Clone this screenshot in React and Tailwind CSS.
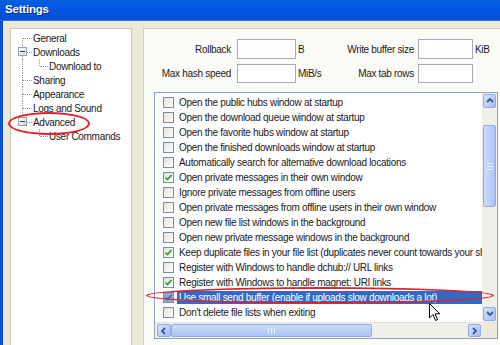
import React from 'react';

const items = [
  { text: 'Open the public hubs window at startup' },
  { text: 'Open the download queue window at startup' },
  { text: 'Open the favorite hubs window at startup' },
  { text: 'Open the finished downloads window at startup' },
  { text: 'Automatically search for alternative download locations' },
  { text: 'Open private messages in their own window', checked: true },
  { text: 'Ignore private messages from offline users' },
  { text: 'Open private messages from offline users in their own window' },
  { text: 'Open new file list windows in the background' },
  { text: 'Open new private message windows in the background' },
  { text: 'Keep duplicate files in your file list (duplicates never count towards your share)', checked: true },
  { text: 'Register with Windows to handle dchub:// URL links' },
  { text: 'Register with Windows to handle magnet: URI links', checked: true },
  { text: 'Use small send buffer (enable if uploads slow downloads a lot)', checked: true, selected: true },
  { text: "Don't delete file lists when exiting" },
  { text: 'Automatically disconnect users who leave the hub' },
];

function CheckBox({ checked, selected }) {
  return (
    <span
      className={`w-[11px] h-[11px] shrink-0 border border-[#7b8ea3] flex items-center justify-center ${
        selected ? 'bg-[#8aa9d6]' : 'bg-gradient-to-br from-[#e2e2dc] to-white'
      }`}
    >
      {checked && (
        <svg width="9" height="9" viewBox="0 0 9 9">
          <path d="M1.5 4.5 L3.5 6.5 L7.5 2" fill="none" stroke={selected ? '#2a6fb0' : '#21a121'} strokeWidth="1.6" />
        </svg>
      )}
    </span>
  );
}

function Minus() {
  return (
    <span className="absolute left-[7px] top-[2px] w-[9px] h-[9px] border border-[#94a2b3] bg-gradient-to-br from-white to-[#d8d8d0] flex items-center justify-center">
      <span className="w-[5px] h-px bg-[#3b3b3b]" />
    </span>
  );
}

function TreeRow({ label, level, minus, vTop, vBottom, outer }) {
  if (level === 0) {
    return (
      <div className="h-[14px] flex items-center">
        <span className="relative w-[22px] h-full shrink-0">
          {vTop && <span className="absolute left-[11px] top-0 h-[7px] border-l border-dotted border-[#9a9a9a]" />}
          {vBottom && <span className="absolute left-[11px] top-[7px] h-[7px] border-l border-dotted border-[#9a9a9a]" />}
          <span className="absolute left-[12px] top-[7px] w-[9px] border-t border-dotted border-[#9a9a9a]" />
          {minus && <Minus />}
        </span>
        <span>{label}</span>
      </div>
    );
  }
  return (
    <div className="h-[14px] flex items-center">
      <span className="relative w-[22px] h-full shrink-0">
        {outer && <span className="absolute left-[11px] top-0 h-[14px] border-l border-dotted border-[#9a9a9a]" />}
      </span>
      <span className="relative w-[16px] h-full shrink-0">
        <span className="absolute left-[6px] top-0 h-[7px] border-l border-dotted border-[#9a9a9a]" />
        <span className="absolute left-[7px] top-[7px] w-[8px] border-t border-dotted border-[#9a9a9a]" />
      </span>
      <span>{label}</span>
    </div>
  );
}

function Arrow({ dir }) {
  const d = {
    up: 'M2 6 L5 3 L8 6',
    down: 'M2 3 L5 6 L8 3',
    left: 'M6 2 L3 5 L6 8',
    right: 'M3 2 L6 5 L3 8',
  }[dir];
  return (
    <svg width="10" height="10" viewBox="0 0 10 10">
      <path d={d} fill="none" stroke="#3d5a8f" strokeWidth="1.8" />
    </svg>
  );
}

function ScrollBtn({ dir, className = '' }) {
  return (
    <div className={`shrink-0 rounded-[2px] border border-[#8eaaea] bg-gradient-to-br from-[#d6e2fc] to-[#a3bdf3] flex items-center justify-center ${className}`}>
      <Arrow dir={dir} />
    </div>
  );
}

export default function App() {
  return (
    <div
      className="w-[500px] h-[345px] overflow-hidden bg-[#ece9d8] text-black relative"
      style={{ fontFamily: '"Liberation Sans", Arial, sans-serif' }}
    >
      {/* title bar */}
      <div className="h-[21px] flex items-center px-[5px] bg-gradient-to-b from-[#0a5fdc] via-[#0054e3] to-[#0650d0] border-b border-[#2c6fdc]">
        <span className="text-white font-bold text-[11.5px] tracking-[-0.2px] [text-shadow:1px_1px_0_#0a2a7a]">Settings</span>
      </div>

      <div className="flex items-start h-[324px] border-l-[3px] border-[#0a4fd0] pl-[7px] pt-[7px]">
        {/* tree */}
        <div className="w-[122px] h-[317px] shrink-0 bg-white border border-[#c9c7ba] border-b-0 pt-[2px] text-[10px] tracking-[-0.3px] text-[#1a1a1a]">
          <TreeRow label="General" level={0} vBottom />
          <TreeRow label="Downloads" level={0} minus vTop vBottom />
          <TreeRow label="Download to" level={1} outer />
          <TreeRow label="Sharing" level={0} vTop vBottom />
          <TreeRow label="Appearance" level={0} vTop vBottom />
          <TreeRow label="Logs and Sound" level={0} vTop vBottom />
          <TreeRow label="Advanced" level={0} minus vTop />
          <TreeRow label="User Commands" level={1} />
        </div>

        {/* right panel */}
        <div className="ml-[11px] w-[357px] h-[317px] shrink-0 bg-[#fbfbf8] border border-[#cfcdbd] border-r-0 border-b-0 pt-[10px] text-[10px] tracking-[-0.3px] text-[#1a1a1a]">
          <div className="flex items-center h-[20px]">
            <span className="w-[87px] text-right">Rollback</span>
            <span className="ml-[6px] w-[59px] h-[20px] bg-white border border-[#a5acb5]" />
            <span className="ml-[2px] w-[49px]">B</span>
            <span className="w-[67px] text-right whitespace-nowrap">Write buffer size</span>
            <span className="ml-[4px] w-[55px] h-[20px] bg-white border border-[#a5acb5]" />
            <span className="ml-[2px]">KiB</span>
          </div>
          <div className="flex items-center h-[19px] mt-[5px]">
            <span className="w-[87px] text-right">Max hash speed</span>
            <span className="ml-[6px] w-[59px] h-[19px] bg-white border border-[#a5acb5]" />
            <span className="ml-[2px] w-[49px]">MiB/s</span>
            <span className="w-[67px] text-right whitespace-nowrap">Max tab rows</span>
            <span className="ml-[4px] w-[55px] h-[19px] bg-white border border-[#a5acb5]" />
          </div>

          {/* list */}
          <div className="mt-[9px] ml-[10px] w-[344px] h-[247px] bg-white border border-[#8ea4c1] flex flex-col">
            <div className="h-[229px] shrink-0 flex overflow-hidden">
              <div className="w-[327px] h-[229px] overflow-hidden pt-[2px]">
                {items.map((it, i) => (
                  <div key={i} className="h-[15px] flex items-center pl-[8px] whitespace-nowrap">
                    <CheckBox checked={it.checked} selected={it.selected} />
                    <span
                      className={`ml-[3px] px-[2px] h-[13px] leading-[13px] ${
                        it.selected ? 'bg-[#316ac5] text-white w-[305px] shrink-0 overflow-hidden' : ''
                      }`}
                    >
                      {it.text}
                    </span>
                  </div>
                ))}
              </div>
              <div className="w-[15px] h-[229px] shrink-0 bg-[#f0efe8] flex flex-col py-[1px]">
                <ScrollBtn dir="up" className="h-[14px] mx-[1px]" />
                <div className="flex-1 pt-[17px] pb-[100px] px-[1px]">
                  <div className="h-full rounded-[2px] border border-[#8eaaea] bg-gradient-to-r from-[#cddcfc] to-[#abc3f5] flex flex-col items-center justify-center gap-[2px]">
                    <span className="w-[6px] h-px bg-[#eef3fe]" />
                    <span className="w-[6px] h-px bg-[#eef3fe]" />
                    <span className="w-[6px] h-px bg-[#eef3fe]" />
                  </div>
                </div>
                <ScrollBtn dir="down" className="h-[14px] mx-[1px]" />
              </div>
            </div>
            <div className="h-[16px] shrink-0 flex border-t border-[#e4e2d6]">
              <div className="w-[327px] flex bg-[#f0efe8] py-[1px] pl-[2px] pr-[1px]">
                <ScrollBtn dir="left" className="w-[14px]" />
                <div className="w-[201px] shrink-0 rounded-[2px] border border-[#8eaaea] bg-gradient-to-b from-[#cddcfc] to-[#abc3f5] flex items-center justify-center gap-[2px]">
                  <span className="w-px h-[6px] bg-[#eef3fe]" />
                  <span className="w-px h-[6px] bg-[#eef3fe]" />
                  <span className="w-px h-[6px] bg-[#eef3fe]" />
                </div>
                <div className="flex-1" />
                <ScrollBtn dir="right" className="w-[13px]" />
              </div>
              <div className="w-[15px] bg-[#ece9d8]" />
            </div>
          </div>
        </div>
      </div>

      {/* red annotation ellipses */}
      <div className="absolute left-[8px] top-[112px] w-[82px] h-[23px] rounded-[50%] border-2 border-[#e0222c]" />
      <div className="absolute left-[146px] top-[287px] w-[348px] h-[17px] rounded-[50%] border-2 border-[#e0222c]" />

      {/* mouse cursor */}
      <svg className="absolute left-[429px] top-[303px]" width="12" height="19" viewBox="0 0 12 19">
        <path d="M0.5 0.5 L0.5 15 L4 11.5 L6.5 17.5 L8.5 16.5 L6 10.8 L10.8 10.8 Z" fill="white" stroke="black" strokeWidth="1" />
      </svg>
    </div>
  );
}
